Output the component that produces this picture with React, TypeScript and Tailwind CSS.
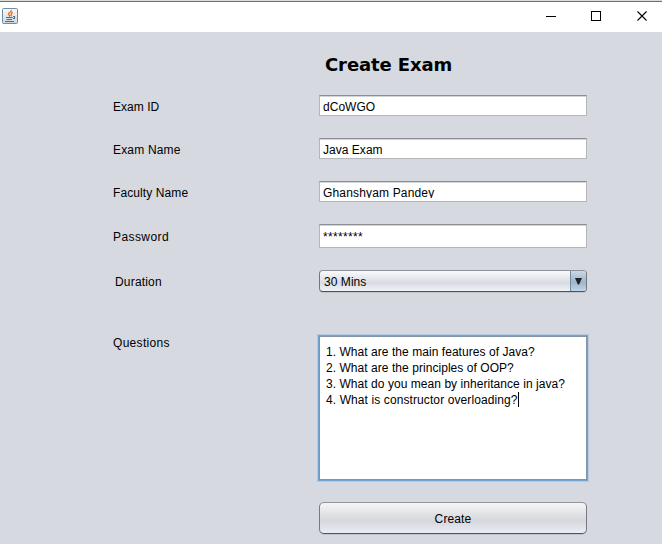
import type { ReactNode } from "react";

function Row({ label, className = "", labelClass = "", children }: { label: string; className?: string; labelClass?: string; children: ReactNode }) {
  return (
    <div className={`flex ${className}`}>
      <div className={`w-[206px] shrink-0 ${labelClass}`}>{label}</div>
      {children}
    </div>
  );
}

function Field({ text, className, textClass = "" }: { text: string; className: string; textClass?: string }) {
  return (
    <div className={`w-[268px] border border-[#b5b6bb] border-t-[#8d8e93] bg-white pl-[3px] shadow-[inset_0_1px_0_#d3d4d8] ${className}`}>
      <div className={textClass}>{text}</div>
    </div>
  );
}

function JavaIcon() {
  return (
    <svg width="16" height="16" viewBox="0 0 16 16" className="ml-[2px] mt-[6px]">
      <defs>
        <linearGradient id="tile" x1="0" y1="0" x2="0" y2="1">
          <stop offset="0" stopColor="#f8f8f9" />
          <stop offset="1" stopColor="#cfd9e3" />
        </linearGradient>
      </defs>
      <rect x="0.5" y="0.5" width="15" height="15" rx="1" fill="url(#tile)" stroke="#6d8ba2" />
      <path d="M9.3 2C9.8 4 6.2 4.4 6.5 6.2C6.7 7.2 7.8 7.3 7.5 8.6M10.8 4.2C8.3 5 9.8 6.6 8.8 8.2" fill="none" stroke="#e8771f" strokeWidth="1.5" />
      <path d="M4 9.5H10.5M4.5 11.5H10M11 8.5H12.5V10.5H10.8M3 13.5H12" fill="none" stroke="#416f93" strokeWidth="1.1" />
    </svg>
  );
}

export default function App() {
  return (
    <div className="flex h-[544px] w-[662px] flex-col overflow-hidden bg-[#d6d9e0] font-['Liberation_Sans',Arial,sans-serif] text-[12px] leading-[16px] tracking-[0.13px] text-black">
      <header className="flex h-[32px] shrink-0 justify-between border-t border-[#dcdcdc] bg-white shadow-[inset_0_1px_0_#707070]">
        <div className="pt-[1px]"><JavaIcon /></div>
        <svg width="120" height="31" viewBox="0 0 120 31" fill="none" stroke="#000" shapeRendering="crispEdges">
          <path d="M4 15.5H14M49.5 10.5H58.5V19.5H49.5Z" />
          <path d="M95.5 10.5L104.5 19.5M104.5 10.5L95.5 19.5" shapeRendering="auto" strokeWidth="1.1" />
        </svg>
      </header>

      <main className="flex flex-col pl-[113px]">
        <h1 className="ml-[212px] mt-[21px] h-[24px] font-['DejaVu_Sans',Verdana,sans-serif] text-[18px] font-bold leading-[24px] tracking-[-0.1px]">Create Exam</h1>

        <Row label="Exam ID" className="mt-[18px]" labelClass="pt-[4px] tracking-[0.04px]">
          <Field text="dCoWGO" className="h-[21px] pt-[3px] tracking-[0.03px]" />
        </Row>
        <Row label="Exam Name" className="mt-[22px] h-[21px]" labelClass="pt-[4px] tracking-[0.18px]">
          <Field text="Java Exam" className="h-[21px] pt-[3px] tracking-[0.03px]" />
        </Row>
        <Row label="Faculty Name" className="mt-[22px] h-[21px]" labelClass="pt-[4px] tracking-[0.1px]">
          <Field text="Ghanshyam Pandey" className="h-[21px] pt-[3px] tracking-[0.16px]" textClass="h-[13px] overflow-hidden" />
        </Row>
        <Row label="Password" className="mt-[22px] h-[24px]" labelClass="pt-[5px] tracking-[0.42px]">
          <Field text="********" className="h-[24px] pt-[4px] tracking-[0.33px]" />
        </Row>
        <Row label="Duration" className="mt-[22px] h-[22px]" labelClass="pl-[2px] pt-[4px] tracking-[0.18px]">
          <div className="flex h-[22px] w-[268px] overflow-hidden rounded-[4px] border border-[#707781] border-t-[#8d929a] border-b-[#4c535d] bg-linear-to-b from-[#fafafc] via-[#d8dbe1] via-60% to-[#f0f3f8] shadow-[0_1px_0_#c0c4cb]">
            <div className="flex-1 pl-[4px] pt-[3px] tracking-[0.05px]">30 Mins</div>
            <div className="flex w-[16px] justify-center border-l border-[#738b9f] bg-linear-to-b from-[#cbd8e4] via-[#9fb6ca] via-55% to-[#bfd5e8]">
              <svg width="7" height="7" viewBox="0 0 7 7" className="mt-[7px]"><path d="M0 0H7L4.2 6.5H2.8Z" fill="#1d242b" /></svg>
            </div>
          </div>
        </Row>
        <Row label="Questions" className="mt-[45px] h-[142px]" labelClass="-mt-[2px] tracking-[0.3px]">
          <div className="-mt-px h-[144px] w-[268px] whitespace-pre border border-[#8394a8] bg-white pl-[6px] pt-[7px] tracking-[0.05px] shadow-[0_0_0_1px_#73a4d1,0_0_0_2px_#b4cae0]">
            <div>1. What are the main features of Java?</div>
            <div>2. What are the principles of OOP?</div>
            <div>3. What do you mean by inheritance in java?</div>
            <div className="flex tracking-[0.1px]">4. What is constructor overloading?<span className="h-[15px] w-px bg-black" /></div>
          </div>
        </Row>
        <button className="ml-[206px] mt-[23px] flex h-[32px] w-[268px] items-center justify-center rounded-[5px] border border-[#777a80] border-t-[#92959a] border-b-[#50545b] bg-linear-to-b from-[#f5f5f7] via-[#d5d7dc] via-60% to-[#e9edf5] pt-px tracking-[0.13px] shadow-[0_1px_0_#bfc3ca]">Create</button>
      </main>
    </div>
  );
}
